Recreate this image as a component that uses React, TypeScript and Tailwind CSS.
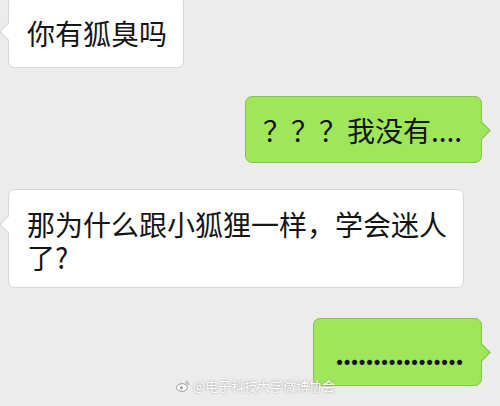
import React from "react";

const font = { fontFamily: '"Noto Sans CJK SC", "Noto Sans", sans-serif' };

function LeftTail() {
  return (
    <div className="absolute left-[-7px] top-[28px] h-[13px] w-[13px] rotate-45 border-b border-l border-[#d6d6d6] bg-white" />
  );
}

function RightTail() {
  return (
    <div className="absolute right-[-7px] top-[27px] h-[13px] w-[13px] rotate-45 border-r border-t border-[#86c24c] bg-[#a0e65a]" />
  );
}

export default function App() {
  return (
    <div
      className="relative h-[406px] w-[500px] overflow-hidden bg-[#ececec] text-[28px] text-[#151515]"
      style={font}
    >
      <div className="flex flex-col">
        <div className="relative ml-[8px] mt-[-4px] flex h-[72px] w-[176px] items-center rounded-[7px] border border-[#d6d6d6] bg-white pl-[18px] pt-[2px] leading-none">
          <LeftTail />
          <span className="relative">你有狐臭吗</span>
        </div>

        <div className="relative mr-[18px] mt-[28px] flex h-[67px] w-[237px] items-center self-end rounded-[7px] border border-[#86c24c] bg-[#a0e65a] pl-[17px] leading-none">
          <RightTail />
          <span className="relative whitespace-nowrap">？？？我没有....</span>
        </div>

        <div className="relative ml-[8px] mt-[26px] h-[99px] w-[456px] rounded-[7px] border border-[#d6d6d6] bg-white pl-[18px] pr-[12px] pt-[18px] leading-[33px]">
          <LeftTail />
          <p className="relative">那为什么跟小狐狸一样，学会迷人了?</p>
        </div>

        <div className="relative mr-[18px] mt-[30px] flex h-[68px] w-[169px] items-center self-end rounded-[7px] border border-[#86c24c] bg-[#a0e65a] pl-[21px] pt-[2px] leading-none">
          <RightTail />
          <span className="relative whitespace-nowrap font-semibold tracking-[-1.6px]">.................</span>
        </div>
      </div>

      <div className="absolute left-[176px] top-[379px] flex items-center gap-[3px] text-[13px] leading-none text-white [text-shadow:0_0_2px_#8a8a8a]">
        <svg width="14" height="12" viewBox="0 0 14 12">
          <ellipse cx="6" cy="7.5" rx="5.5" ry="3.8" fill="#ffffff" stroke="#9a9a9a" strokeWidth="1" />
          <circle cx="5.5" cy="7.8" r="1.6" fill="#9a9a9a" />
          <path d="M9.5 1.5 A3 3 0 0 1 12.8 4.8" fill="none" stroke="#9a9a9a" strokeWidth="1" />
          <path d="M9.8 3.2 A1.4 1.4 0 0 1 11.2 4.6" fill="none" stroke="#9a9a9a" strokeWidth="1" />
        </svg>
        <span>@电子科技大学微博协会</span>
      </div>
    </div>
  );
}
